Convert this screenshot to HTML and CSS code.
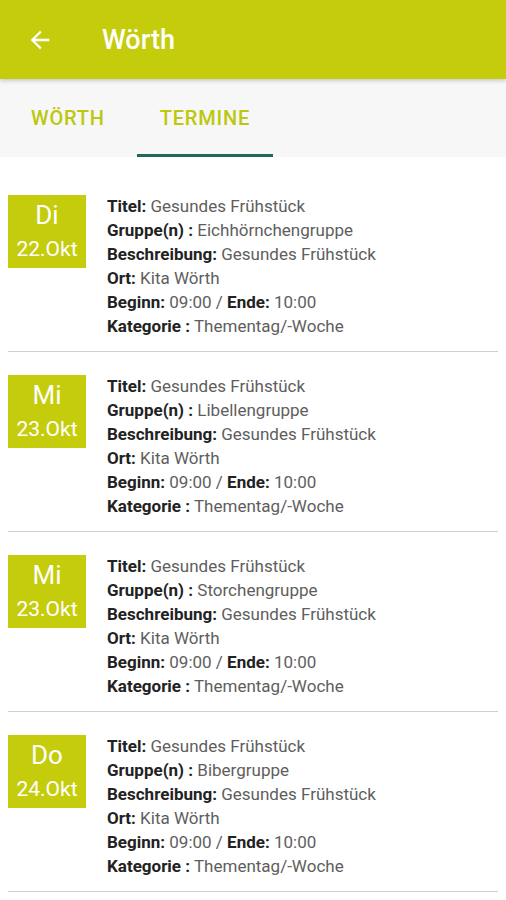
FILE: index.html
```html
<!DOCTYPE html>
<html lang="de">
<head>
  <meta charset="UTF-8" />
  <meta name="viewport" content="width=device-width, initial-scale=1" />
  <title>Wörth</title>
  <link rel="stylesheet" href="styles.css">
</head>
<body>

  <header class="toolbar">
    <svg class="back" viewBox="0 0 24 24" width="28" height="28">
      <path d="M20 11H7.830l5.59-5.59L12 4l-8 8 8 8 1.41-1.41L7.83 13H20v-2z" fill="#fff"/>
    </svg>
    <h1>Wörth</h1>
  </header>

  <nav class="tabs">
    <div class="tab">WÖRTH</div>
    <div class="tab active">TERMINE</div>
  </nav>

  <div class="list">

    <div class="event">
      <div class="date">
        <div class="day">Di</div>
        <div class="dm">22.Okt</div>
      </div>
      <div class="info">
        <div><b>Titel:</b> Gesundes Frühstück</div>
        <div><b>Gruppe(n) :</b> Eichhörnchengruppe</div>
        <div><b>Beschreibung:</b> Gesundes Frühstück</div>
        <div><b>Ort:</b> Kita Wörth</div>
        <div><b>Beginn:</b> 09:00 / <b>Ende:</b> 10:00</div>
        <div><b>Kategorie :</b> Thementag/-Woche</div>
      </div>
    </div>

    <div class="event">
      <div class="date">
        <div class="day">Mi</div>
        <div class="dm">23.Okt</div>
      </div>
      <div class="info">
        <div><b>Titel:</b> Gesundes Frühstück</div>
        <div><b>Gruppe(n) :</b> Libellengruppe</div>
        <div><b>Beschreibung:</b> Gesundes Frühstück</div>
        <div><b>Ort:</b> Kita Wörth</div>
        <div><b>Beginn:</b> 09:00 / <b>Ende:</b> 10:00</div>
        <div><b>Kategorie :</b> Thementag/-Woche</div>
      </div>
    </div>

    <div class="event">
      <div class="date">
        <div class="day">Mi</div>
        <div class="dm">23.Okt</div>
      </div>
      <div class="info">
        <div><b>Titel:</b> Gesundes Frühstück</div>
        <div><b>Gruppe(n) :</b> Storchengruppe</div>
        <div><b>Beschreibung:</b> Gesundes Frühstück</div>
        <div><b>Ort:</b> Kita Wörth</div>
        <div><b>Beginn:</b> 09:00 / <b>Ende:</b> 10:00</div>
        <div><b>Kategorie :</b> Thementag/-Woche</div>
      </div>
    </div>

    <div class="event">
      <div class="date">
        <div class="day">Do</div>
        <div class="dm">24.Okt</div>
      </div>
      <div class="info">
        <div><b>Titel:</b> Gesundes Frühstück</div>
        <div><b>Gruppe(n) :</b> Bibergruppe</div>
        <div><b>Beschreibung:</b> Gesundes Frühstück</div>
        <div><b>Ort:</b> Kita Wörth</div>
        <div><b>Beginn:</b> 09:00 / <b>Ende:</b> 10:00</div>
        <div><b>Kategorie :</b> Thementag/-Woche</div>
      </div>
    </div>

  </div>

</body>
</html>
```

FILE: styles.css
```css
body {
  margin: 0;
  font-family: Roboto, "Noto Sans", sans-serif;
  background: #fff;
  color: #555;
  overflow: hidden;
}
.toolbar {
  height: 79px;
  background: #c4cc0c;
  display: flex;
  align-items: center;
  padding-left: 26px;
  position: relative;
  z-index: 1;
  box-shadow: 0 2px 4px rgb(0 0 0 / 0.18);
}
.back {
  display: block;
}
.toolbar h1 {
  margin: 2px 0 0 48px;
  font-size: 27px;
  font-weight: 500;
  color: #fff;
  line-height: 1;
}
.tabs {
  height: 78px;
  background: #f7f7f7;
  display: flex;
  gap: 9px;
  padding-left: 8px;
}
.tab {
  padding: 3px 23px 0 23px;
  display: flex;
  align-items: center;
  font-size: 20px;
  font-weight: 500;
  color: #bcc80e;
  letter-spacing: 0.8px;
  border-bottom: 3px solid transparent;
}
.tab.active {
  border-bottom-color: #1c6b58;
}
.list {
  padding: 15px 8px 0 8px;
}
.event {
  display: flex;
  padding: 22px 0 13px 0;
  border-bottom: 1px solid #cfcfcf;
}
.date {
  width: 78px;
  height: 73px;
  margin-top: 1px;
  background: #c4cc0c;
  color: #fff;
  text-align: center;
  flex-shrink: 0;
}
.day {
  font-size: 26px;
  line-height: 30px;
  padding-top: 5px;
}
.dm {
  font-size: 21px;
  line-height: 28px;
  margin-top: 5px;
}
.info {
  margin-left: 21px;
  font-size: 17px;
  line-height: 24px;
  color: #5e5e5e;
}
.info b {
  color: #222;
  font-weight: 700;
}
```
